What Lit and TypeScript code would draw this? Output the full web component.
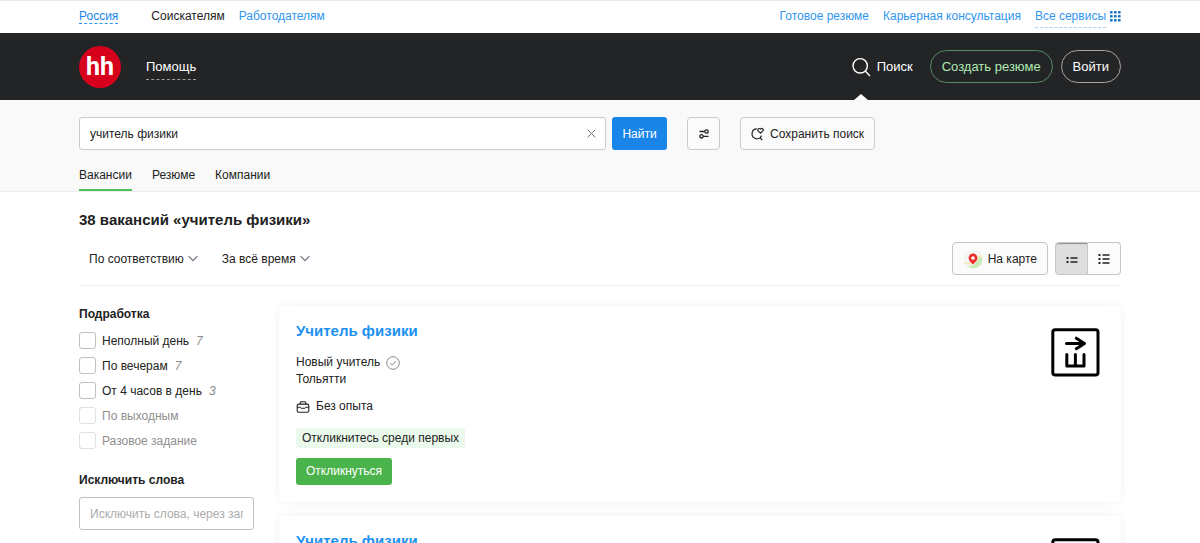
import { LitElement, html, css, svg } from "lit";
import { customElement, property, state } from "lit/decorators.js";

interface PartTimeOption {
  label: string;
  count?: number;
}

const PART_TIME: PartTimeOption[] = [
  { label: "Неполный день", count: 7 },
  { label: "По вечерам", count: 7 },
  { label: "От 4 часов в день", count: 3 },
  { label: "По выходным" },
  { label: "Разовое задание" },
];

const chevron = html`<svg class="chevron" width="10" height="7" viewBox="0 0 10 7" fill="none" stroke="#6b7480" stroke-width="1.2" aria-hidden="true">
  <path d="M.6 1.200 5 5.700l4.400-4.500" />
</svg>`;

@customElement("site-header")
export class SiteHeader extends LitElement {
  static styles = css`
    :host {
      display: block;
      font-size: 12px;
      line-height: 16px;
    }
    a {
      color: #2f96ef;
      text-decoration: none;
    }
    button {
      font: inherit;
      margin: 0;
      cursor: pointer;
    }
    .top {
      display: flex;
      align-items: center;
      height: 33px;
      box-sizing: border-box;
      padding: 0 79px 2px;
      border-top: 1px solid #e8e8e8;
      background: #fff;
    }
    .region {
      padding: 1px 0 0;
      border: 0;
      border-bottom: 1px dashed #2f96ef;
      background: none;
      color: #1686ea;
      line-height: 14px;
      margin-right: 33px;
    }
    .current {
      color: #222;
      margin-right: 14px;
    }
    .services {
      display: flex;
      align-items: center;
      gap: 14px;
      margin-left: auto;
    }
    .all {
      display: flex;
      align-items: center;
      gap: 4px;
    }
    .all span {
      border-bottom: 1px dashed #a9d4fa;
      padding: 4px 0 3px;
    }
    .bar {
      display: flex;
      align-items: center;
      height: 67px;
      box-sizing: border-box;
      padding: 0 79px;
      background: #232426;
      font-size: 13px;
    }
    .bar a,
    .bar button {
      color: #fff;
    }
    .logo {
      display: flex;
      align-items: center;
      justify-content: center;
      width: 42px;
      height: 42px;
      border-radius: 50%;
      background: #d6001c;
      font: 700 25px/25px Roboto, "Liberation Sans", sans-serif;
      margin-right: 25px;
    }
    .help {
      padding: 5px 0 4px;
      border: 0;
      border-bottom: 1px dashed #a0a0a0;
      background: none;
    }
    .find {
      position: relative;
      display: flex;
      align-items: center;
      align-self: stretch;
      gap: 6px;
      margin: 0 17px 0 auto;
    }
    .find::after {
      content: "";
      position: absolute;
      bottom: 0;
      left: 2px;
      border: 7px solid transparent;
      border-top: 0;
      border-bottom: 6px solid #fff;
    }
    .pill {
      height: 33px;
      box-sizing: border-box;
      padding: 0 11px;
      border: 1px solid #a5a5a6;
      border-radius: 17px;
      background: none;
      display: flex;
      align-items: center;
    }
    .bar .create {
      border-color: #5c8a62;
      color: #aee9b4;
      margin-right: 8px;
    }
  `;

  render() {
    return html`
      <header>
        <nav class="top" aria-label="Разделы сайта">
          <button class="region" type="button">Россия</button>
          <a class="current" href="#">Соискателям</a>
          <a href="#">Работодателям</a>
          <div class="services">
            <a href="#">Готовое резюме</a>
            <a href="#">Карьерная консультация</a>
            <a class="all" href="#"
              ><span>Все сервисы</span>
              <svg width="11" height="11" viewBox="0 0 11 11" fill="#1675c8" aria-hidden="true">
                ${[0, 4, 8].map((y) => [0, 4, 8].map((x) => svg`<rect x=${x} y=${y} width="2.6" height="2.6" rx=".6"/>`))}
              </svg></a
            >
          </div>
        </nav>
        <div class="bar">
          <a class="logo" href="#">hh</a>
          <button class="help" type="button">Помощь</button>
          <a class="find" href="#">
            <svg width="19" height="20" viewBox="0 0 19 20" fill="none" stroke="#fff" stroke-width="1.4" aria-hidden="true">
              <circle cx="8.2" cy="8.8" r="7.2" />
              <path d="m13.3 14 4.7 4.9" />
            </svg>
            Поиск
          </a>
          <a class="pill create" href="#">Создать резюме</a>
          <a class="pill" href="#">Войти</a>
        </div>
      </header>
    `;
  }
}

@customElement("search-panel")
export class SearchPanel extends LitElement {
  @state() private query = "учитель физики";

  static styles = css`
    :host {
      display: block;
      box-sizing: border-box;
      padding: 17px 79px 0;
      background: #f9f9f9;
      border-bottom: 1px solid #ededed;
      font-size: 12px;
      line-height: 16px;
      color: #222;
    }
    form {
      display: flex;
      align-items: stretch;
      height: 33px;
      margin: 0;
    }
    button,
    input {
      font: inherit;
      color: inherit;
      margin: 0;
      box-sizing: border-box;
    }
    button {
      cursor: pointer;
    }
    .field {
      display: flex;
      align-items: center;
      flex: 0 1 527px;
      box-sizing: border-box;
      border: 1px solid #cacbcd;
      border-radius: 3px;
      background: #fff;
    }
    .query {
      flex: 1;
      min-width: 0;
      padding: 0 10px;
      border: 0;
      outline: 0;
      background: none;
    }
    .clear {
      display: flex;
      padding: 9px;
      border: 0;
      background: none;
    }
    .submit {
      width: 55px;
      margin: 0 20px 0 6px;
      padding: 0;
      border: 0;
      border-radius: 3px;
      background: #1a85e8;
      color: #fff;
    }
    .submit,
    .tune,
    .save {
      display: flex;
      align-items: center;
      justify-content: center;
    }
    .tune,
    .save {
      border: 1px solid #cacbcd;
      border-radius: 4px;
      background: #fbfbfb;
      padding: 0;
    }
    .tune {
      width: 33px;
      margin-right: 20px;
    }
    .save {
      gap: 6px;
      padding: 0 10px;
    }
    .tabs {
      display: flex;
      gap: 20px;
      margin-top: 17px;
    }
    .tab {
      color: inherit;
      text-decoration: none;
      padding-bottom: 6px;
      border-bottom: 2px solid transparent;
    }
    .active {
      border-color: #4fc35a;
    }
  `;

  render() {
    return html`
      <form role="search" @submit=${(e: Event) => e.preventDefault()}>
        <div class="field">
          <input
            class="query"
            aria-label="Поиск"
            .value=${this.query}
            @input=${(e: InputEvent) => (this.query = (e.target as HTMLInputElement).value)}
          />
          <button class="clear" type="button" aria-label="Очистить" @click=${() => (this.query = "")}>
            <svg width="9" height="9" viewBox="0 0 9 9" stroke="#777" stroke-width="1"><path d="m.6.6 7.8 7.8m0-7.8L.6 8.4" /></svg>
          </button>
        </div>
        <button class="submit" type="submit">Найти</button>
        <button class="tune" type="button" aria-label="Фильтры">
          <svg width="10" height="10" viewBox="0 0 10 10" fill="none" stroke="#222" stroke-width="1.3">
            <path d="M.5 2.5h5M4.500 7.300h5" />
            <circle cx="7.5" cy="2.5" r="1.7" />
            <circle cx="2.5" cy="7.3" r="1.7" />
          </svg>
        </button>
        <button class="save" type="button">
          <svg width="13" height="14" viewBox="0 0 13 14" fill="none" stroke="#222" stroke-width="1.2" aria-hidden="true">
            <path d="M5.8 1.9a4.9 4.9 0 1 0 4.7 6.7M9 10.6l2.2 2.6" />
            <path d="M9.5 6.2 7.2 3.9a1.35 1.35 0 0 1 2-2l.3.3.3-.3a1.35 1.35 0 0 1 2 2z" />
          </svg>
          Сохранить поиск
        </button>
      </form>
      <nav class="tabs" aria-label="Что искать">
        <a class="tab active" href="#">Вакансии</a>
        <a class="tab" href="#">Резюме</a>
        <a class="tab" href="#">Компании</a>
      </nav>
    `;
  }
}

@customElement("filter-sidebar")
export class FilterSidebar extends LitElement {
  static styles = css`
    :host {
      display: block;
      font-size: 12px;
      line-height: 16px;
      color: #222;
    }
    fieldset {
      margin: 0;
      padding: 0;
      border: 0;
    }
    .title {
      display: block;
      padding: 0;
      font-weight: 700;
    }
    .options {
      display: grid;
      gap: 8px;
      padding: 10px 0 23px;
    }
    .option {
      display: flex;
      align-items: center;
      height: 17px;
    }
    .box {
      appearance: none;
      width: 17px;
      height: 17px;
      margin: 0 6px 0 0;
      border: 1px solid #c0c0c2;
      border-radius: 3px;
      background: #fff;
    }
    .box:checked {
      background: #1a85e8;
      border-color: #1a85e8;
    }
    .count {
      font-style: italic;
      color: #8a8a8a;
      margin-left: 7px;
    }
    .off {
      color: #8f8f8f;
    }
    .off .box {
      border-color: #e0e0e0;
    }
    .exclude {
      width: 100%;
      height: 33px;
      box-sizing: border-box;
      margin: 9px 0 0;
      padding: 0 10px;
      border: 1px solid #bfc1c4;
      border-radius: 3px;
      font: inherit;
      color: inherit;
      background: #fff;
    }
    .exclude::placeholder {
      color: #acacac;
    }
  `;

  render() {
    return html`
      <fieldset>
        <legend class="title">Подработка</legend>
        <div class="options">
          ${PART_TIME.map(
            (o) => html`<label class="option ${o.count ? "" : "off"}">
              <input class="box" type="checkbox" ?disabled=${!o.count} />${o.label}
              ${o.count ? html`<span class="count">${o.count}</span>` : null}
            </label>`
          )}
        </div>
      </fieldset>
      <label class="title" for="exclude">Исключить слова</label>
      <input class="exclude" id="exclude" placeholder="Исключить слова, через запятую" />
    `;
  }
}

@customElement("vacancy-card")
export class VacancyCard extends LitElement {
  @property() heading = "";
  @property() company = "";
  @property() city = "";

  static styles = css`
    :host {
      display: flex;
      justify-content: space-between;
      align-items: flex-start;
      padding: 17px 21px 17px 17px;
      border-radius: 4px;
      background: #fff;
      box-shadow: 0 0 12px rgba(0, 0, 0, 0.06);
      font-size: 12px;
      line-height: 17px;
      color: #222;
    }
    h2 {
      margin: 0 0 15px;
      font-size: 15px;
      line-height: 16px;
    }
    h2 a {
      color: #2191f0;
      text-decoration: none;
    }
    .row {
      display: flex;
      align-items: center;
      gap: 6px;
    }
    .link {
      color: inherit;
      text-decoration: none;
    }
    .experience {
      margin: 10px 0 13px;
    }
    .hint {
      width: fit-content;
      padding: 2px 6px 1px;
      border-radius: 2px;
      background: #eaf9eb;
    }
    .apply {
      display: block;
      margin: 10px 0 0;
      height: 27px;
      padding: 0 10px;
      border: 0;
      border-radius: 3px;
      background: #4bb34b;
      color: #fff;
      font: inherit;
      cursor: pointer;
    }
    .brand {
      margin-top: 5px;
      flex: none;
    }
  `;

  render() {
    return html`
      <div>
        <h2><a href="#">${this.heading}</a></h2>
        <div class="row">
          <a class="link" href="#">${this.company}</a>
          <svg width="14" height="14" viewBox="0 0 14 14" fill="none" stroke="#8a8a8a" stroke-width="1" aria-hidden="true">
            <circle cx="7" cy="7" r="6.3" />
            <path d="m4.2 7.1 2 1.9 3.7-3.8" />
          </svg>
        </div>
        <div>${this.city}</div>
        <div class="row experience">
          <svg width="14" height="12" viewBox="0 0 14 12" fill="none" stroke="#222" stroke-width="1.1" aria-hidden="true">
            <rect x="1.2" y="3.1" width="11.6" height="8.2" rx="1.6" />
            <path d="M4.3 3V1.600Q4.300.7 5.200.7h3.600q.9 0 .9.9V3M1.200 6.200h3.600M9.200 6.200h3.600M4.800 7.200h4.400" />
          </svg>
          Без опыта
        </div>
        <div class="hint">Откликнитесь среди первых</div>
        <button class="apply" type="button">Откликнуться</button>
      </div>
      <svg class="brand" width="49" height="49" viewBox="0 0 49 49" fill="none" stroke="#000" stroke-width="3" stroke-linecap="round" stroke-linejoin="round" aria-hidden="true">
        <rect x="1.8" y="1.8" width="45.2" height="45.2" rx="2.5" />
        <path d="M15.500 15.500h17.500M25.300 10.200l8.200 5.300-8.200 5.300M15.800 26.500v11.500h17.200v-11.500M24.400 26.500v11.500" />
      </svg>
    `;
  }
}

@customElement("app-root")
export class AppRoot extends LitElement {
  @state() private compact = true;

  static styles = css`
    :host {
      display: block;
      height: 100vh;
      overflow: hidden;
      background: #fff;
      font-family: "Liberation Sans", Arial, sans-serif;
      font-size: 12px;
      line-height: 16px;
      color: #222;
    }
    main {
      padding: 0 79px;
    }
    h1 {
      margin: 19px 0 13px;
      font-size: 15px;
      line-height: 18px;
    }
    .toolbar {
      display: flex;
      align-items: center;
      padding-bottom: 10px;
      border-bottom: 1px solid #eeeff1;
    }
    .sort {
      display: flex;
      align-items: center;
      gap: 4px;
      margin: 0 14px 0 10px;
    }
    select {
      appearance: none;
      field-sizing: content;
      padding: 0;
      margin: 0;
      border: 0;
      background: none;
      color: inherit;
      font: inherit;
    }
    button {
      font: inherit;
      color: inherit;
      margin: 0;
      padding: 0;
      box-sizing: border-box;
      display: flex;
      align-items: center;
      justify-content: center;
      height: 33px;
      border: 1px solid #c4c6c9;
      border-radius: 4px;
      background: #fbfbfb;
      cursor: pointer;
    }
    .map {
      gap: 5px;
      padding: 0 10px;
      margin: 0 7px 0 auto;
    }
    .views {
      display: flex;
    }
    .view {
      width: 33px;
    }
    .view:first-child {
      border-radius: 4px 0 0 4px;
    }
    .view:last-child {
      border-radius: 0 4px 4px 0;
      border-left: 0;
    }
    .pressed {
      background: #dedede;
      box-shadow: inset 0 2px 1px -1px #909090;
    }
    .content {
      display: grid;
      grid-template-columns: 175px minmax(0, 1fr);
      gap: 25px;
      padding-top: 20px;
    }
    .list {
      display: grid;
      align-content: start;
      gap: 14px;
    }
  `;

  render() {
    return html`
      <site-header></site-header>
      <search-panel></search-panel>
      <main>
        <h1>38 вакансий «учитель физики»</h1>
        <div class="toolbar">
          <label class="sort">
            <select aria-label="Сортировка">
              <option>По соответствию</option>
              <option>По дате</option>
            </select>
            ${chevron}
          </label>
          <label class="sort">
            <select aria-label="Период">
              <option>За всё время</option>
              <option>За месяц</option>
            </select>
            ${chevron}
          </label>
          <button class="map" type="button">
            <svg width="20" height="20" viewBox="0 0 20 20" aria-hidden="true">
              <circle cx="10" cy="10" r="9.5" fill="#f5f6f2" />
              <path d="M4 17.500Q12 17 14.500 11.500T19.300 8.500Q20 16 14 18.500 9 20.500 4 17.500Z" fill="#c9ecb8" />
              <path d="M1.500 14Q9 16 13 11t6-4" fill="none" stroke="#f6e9b4" stroke-width="1.600" />
              <path d="M10 15.500C7.500 13 5.600 11.200 5.600 8.900a4.400 4.400 0 0 1 8.800 0c0 2.300-1.900 4.100-4.400 6.600Z" fill="#ec2f2f" />
              <circle cx="10" cy="9" r="1.800" fill="#fff" />
            </svg>
            На карте
          </button>
          <div class="views">
            <button class="view ${this.compact ? "pressed" : ""}" type="button" aria-label="Кратко" aria-pressed=${this.compact} @click=${() => (this.compact = true)}>
              <svg width="12" height="10" viewBox="0 0 12 10" fill="#222">
                <path d="M.5 3h2v2h-2zM4.500 3.300h7v1.400h-7zM.5 7h2v2h-2zM4.500 7.300h7v1.400h-7z" />
              </svg>
            </button>
            <button class="view ${this.compact ? "" : "pressed"}" type="button" aria-label="Подробно" aria-pressed=${!this.compact} @click=${() => (this.compact = false)}>
              <svg width="12" height="10" viewBox="0 0 12 10" fill="#222">
                <path d="M.5 0h2v2h-2zM4.500.3h7v1.400h-7zM.5 4h2v2h-2zM4.500 4.300h7v1.400h-7zM.5 8h2v2h-2zM4.500 8.300h7v1.400h-7z" />
              </svg>
            </button>
          </div>
        </div>
        <div class="content">
          <filter-sidebar></filter-sidebar>
          <div class="list">
            <vacancy-card heading="Учитель физики" company="Новый учитель" city="Тольятти"></vacancy-card>
            <vacancy-card heading="Учитель физики" company="Новый учитель" city="Тольятти"></vacancy-card>
          </div>
        </div>
      </main>
    `;
  }
}
